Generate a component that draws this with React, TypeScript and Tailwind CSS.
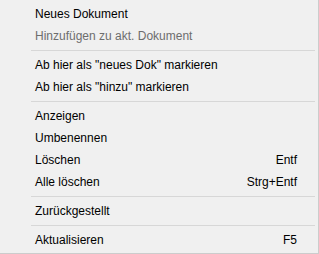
type Item =
    | { kind: "item"; label: string; shortcut?: string; disabled?: boolean }
    | { kind: "sep" };

const items: Item[] = [
    { kind: "item", label: "Neues Dokument" },
    { kind: "item", label: "Hinzufügen zu akt. Dokument", disabled: true },
    { kind: "sep" },
    { kind: "item", label: 'Ab hier als "neues Dok" markieren' },
    { kind: "item", label: 'Ab hier als "hinzu" markieren' },
    { kind: "sep" },
    { kind: "item", label: "Anzeigen" },
    { kind: "item", label: "Umbenennen" },
    { kind: "item", label: "Löschen", shortcut: "Entf" },
    { kind: "item", label: "Alle löschen", shortcut: "Strg+Entf" },
    { kind: "sep" },
    { kind: "item", label: "Zurückgestellt" },
    { kind: "sep" },
    { kind: "item", label: "Aktualisieren", shortcut: "F5" },
];

export default function App() {
    return (
        <div className="h-[254px] w-[319px] border-r border-b border-[#cccccc] bg-[#f0f0f0] py-[3px] font-['Liberation_Sans',Arial,sans-serif] text-[12px] text-black">
            {items.map((item, i) =>
                item.kind === "sep" ? (
                    <div key={i} className="flex h-[7px] items-center pr-[3px] pl-[31px]">
                        <div className="h-px w-full bg-[#d7d7d7]" />
                    </div>
                ) : (
                    <div
                        key={i}
                        className={
                            "flex h-[22px] items-center justify-between pr-[21px] pl-[35px] " +
                            (item.disabled ? "text-[#6d6d6d]" : "")
                        }
                    >
                        <span>{item.label}</span>
                        {item.shortcut && <span>{item.shortcut}</span>}
                    </div>
                ),
            )}
        </div>
    );
}
